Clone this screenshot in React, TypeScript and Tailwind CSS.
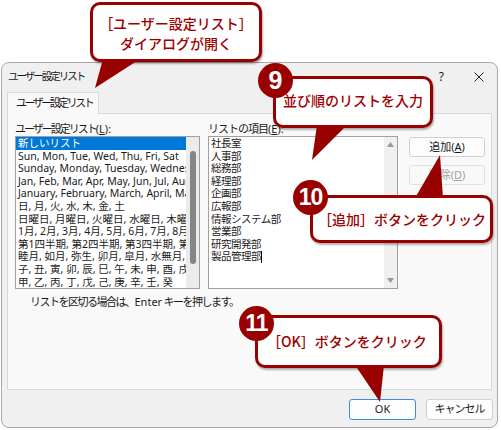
const listItems = [
  '新しいリスト',
  'Sun, Mon, Tue, Wed, Thu, Fri, Sat',
  'Sunday, Monday, Tuesday, Wednesday, Thursday, Friday, Saturday',
  'Jan, Feb, Mar, Apr, May, Jun, Jul, Aug, Sep, Oct, Nov, Dec',
  'January, February, March, April, May, June, July, August',
  '日, 月, 火, 水, 木, 金, 土',
  '日曜日, 月曜日, 火曜日, 水曜日, 木曜日, 金曜日, 土曜日',
  '1月, 2月, 3月, 4月, 5月, 6月, 7月, 8月, 9月, 10月, 11月, 12月',
  '第1四半期, 第2四半期, 第3四半期, 第4四半期',
  '睦月, 如月, 弥生, 卯月, 皐月, 水無月, 文月, 葉月, 長月',
  '子, 丑, 寅, 卯, 辰, 巳, 午, 未, 申, 酉, 戌, 亥',
  '甲, 乙, 丙, 丁, 戊, 己, 庚, 辛, 壬, 癸',
];

const entries = ['社長室', '人事部', '総務部', '経理部', '企画部', '広報部', '情報システム部', '営業部', '研究開発部', '製品管理部'];

export default function App() {
  return (
    <div className="relative w-[501px] h-[430px] overflow-hidden bg-white pt-[62px] pl-[1px] font-['Noto_Sans','Noto_Sans_CJK_JP',sans-serif] text-[#1a1a1a]">
      {/* dialog */}
      <div className="w-[497px] h-[366px] rounded-lg border border-[#a8a8a8] bg-[#f0f0f0] flex flex-col">
        <div className="h-[28px] flex items-center pl-[6px] text-[10.5px]">
          <span className="tracking-[-2px]">ユーザー設定リスト</span>
          <span className="ml-auto text-[12px]">?</span>
          <svg width="10" height="10" viewBox="0 0 10 10" className="ml-[30px] mr-[13px]">
            <path d="M0.5 0.5 L9.5 9.5 M9.5 0.5 L0.5 9.5" stroke="#222" strokeWidth="1" />
          </svg>
        </div>

        <div className="px-[5px] pt-[1px]">
          <div className="flex">
            <div className="relative z-10 -mb-px h-[22px] pl-[8px] pr-[6px] flex items-center bg-[#f9f9f9] border border-b-0 border-[#d9d9d9] text-[11px] tracking-[-2.5px]">
              ユーザー設定リスト
            </div>
          </div>
          <div className="h-[277px] w-[485px] bg-[#f9f9f9] border border-[#d9d9d9] pl-[7px] pt-[7px] text-[11px]">
            <div className="flex">
              <div className="w-[185px]">
                <div className="h-[15px] leading-[15px]">
                  <span className="tracking-[-2px]">ユーザー設定リスト</span>(<span className="underline">L</span>):
                </div>
                <div className="h-[153px] border border-[#a0a0a0] bg-white flex">
                  <div className="flex-1 overflow-hidden whitespace-nowrap text-[10.5px] leading-[12.6px]">
                    {listItems.map((t, i) => (
                      <div key={i} className={i === 0 ? 'bg-[#0078d7] text-white pl-[2px]' : 'pl-[2px]'}>
                        {t}
                      </div>
                    ))}
                  </div>
                  <div className="w-[13px] bg-[#ebebeb] flex justify-center pt-[14px]">
                    <div className="w-[6px] h-[113px] rounded-full bg-[#858585]" />
                  </div>
                </div>
              </div>

              <div className="w-[190px] ml-[8px]">
                <div className="h-[15px] leading-[15px]">
                  <span className="tracking-[-1px]">リストの項目</span>(<span className="underline">E</span>):
                </div>
                <div className="h-[153px] border border-[#a0a0a0] bg-white flex">
                  <div className="flex-1 pl-[2px] text-[10.5px] leading-[12.6px]">
                    {entries.map((t, i) => (
                      <div key={i} className="h-[12.6px] flex items-center tracking-[-0.5px]">
                        {t}
                        {i === entries.length - 1 && <span className="w-px h-[12px] bg-black" />}
                      </div>
                    ))}
                  </div>
                  <div className="w-[13px] bg-[#f0f0f0] flex flex-col items-center justify-between py-[5px]">
                    <svg width="7" height="5" viewBox="0 0 7 5"><path d="M3.5 0 L7 5 L0 5 Z" fill="#9a9a9a" /></svg>
                    <svg width="7" height="5" viewBox="0 0 7 5"><path d="M0 0 L7 0 L3.5 5 Z" fill="#9a9a9a" /></svg>
                  </div>
                </div>
              </div>

              <div className="ml-[11px] pt-[16px] flex flex-col gap-[8px]">
                <button className="w-[76px] h-[20px] rounded-[3px] border border-[#d0d0d0] bg-[#fdfdfd] text-[11px] flex items-center justify-center">
                  追加(<span className="underline">A</span>)
                </button>
                <button className="w-[76px] h-[20px] rounded-[3px] border border-[#e0e0e0] bg-[#f9f9f9] text-[11px] text-[#a0a0a0] flex items-center justify-center">
                  削除(<span className="underline">D</span>)
                </button>
              </div>
            </div>
            <div className="pl-[15px] pt-[6px] leading-[14px] tracking-[-1.5px]">
              リストを区切る場合は、<span className="tracking-normal">Enter</span> キーを押します。
            </div>
          </div>
        </div>

        <div className="flex justify-end gap-[10px] pt-[9px] pr-[4px] text-[11px]">
          <button className="w-[67px] h-[21px] rounded-[3px] border border-[#3d8ee0] bg-[#fdfdfd] flex items-center justify-center">OK</button>
          <button className="w-[67px] h-[21px] rounded-[3px] border border-[#d0d0d0] bg-[#fdfdfd] flex items-center justify-center tracking-[-1px]">キャンセル</button>
        </div>
      </div>

      {/* callouts */}
      <div className="absolute left-[90px] top-[2px] w-[172px] h-[60px] rounded-[10px] border-[3px] border-[#990000] bg-white shadow-[1px_2px_2px_rgba(0,0,0,0.3)] flex flex-col items-center justify-center pt-[2px] font-['Noto_Sans_CJK_JP',sans-serif] font-medium text-[14px] leading-[20px] text-[#a00000]">
        <div>［ユーザー設定リスト］</div>
        <div>ダイアログが開く</div>
      </div>
      <div className="absolute left-[273px] top-[76px] w-[160px] h-[52px] rounded-[10px] border-[3px] border-[#990000] bg-white shadow-[1px_2px_2px_rgba(0,0,0,0.3)] flex items-center pl-[7px] pb-[3px] font-['Noto_Sans_CJK_JP',sans-serif] font-medium text-[14px] text-[#a00000]">
        並び順のリストを入力
      </div>
      <div className="absolute left-[310px] top-[195px] w-[183px] h-[48px] rounded-[10px] border-[3px] border-[#990000] bg-white shadow-[1px_2px_2px_rgba(0,0,0,0.3)] flex items-center pl-[5px] font-['Noto_Sans_CJK_JP',sans-serif] font-medium text-[14px] text-[#a00000]">
        ［追加］ボタンをクリック
      </div>
      <div className="absolute left-[255px] top-[315px] w-[187px] h-[53px] rounded-[10px] border-[3px] border-[#990000] bg-white shadow-[1px_2px_2px_rgba(0,0,0,0.3)] flex items-center pl-[9px] font-['Noto_Sans_CJK_JP',sans-serif] font-medium text-[14px] text-[#a00000]">
        ［OK］ボタンをクリック
      </div>

      <svg className="absolute left-0 top-0 pointer-events-none" width="501" height="430" viewBox="0 0 501 430">
        <polygon points="103,59 140,59 95,88" fill="#990000" />
        <polygon points="317,125 347,125 312,160" fill="#990000" />
        <polygon points="415,198 443,198 440,155" fill="#990000" />
        <polygon points="355,365 384,365 380,402" fill="#990000" />
      </svg>

      <div className="absolute left-[258px] top-[63px] w-[35px] h-[35px] rounded-full bg-[#990000] text-white flex items-center justify-center font-['Liberation_Sans',sans-serif] font-black text-[25px]">9</div>
      <div className="absolute left-[293px] top-[180px] w-[35px] h-[35px] rounded-full bg-[#990000] text-white flex items-center justify-center font-['Liberation_Sans',sans-serif] font-black text-[23px] tracking-[-1px]">10</div>
      <div className="absolute left-[239px] top-[306px] w-[35px] h-[35px] rounded-full bg-[#990000] text-white flex items-center justify-center font-['Liberation_Sans',sans-serif] font-black text-[23px] tracking-[-1px]">11</div>
    </div>
  );
}
